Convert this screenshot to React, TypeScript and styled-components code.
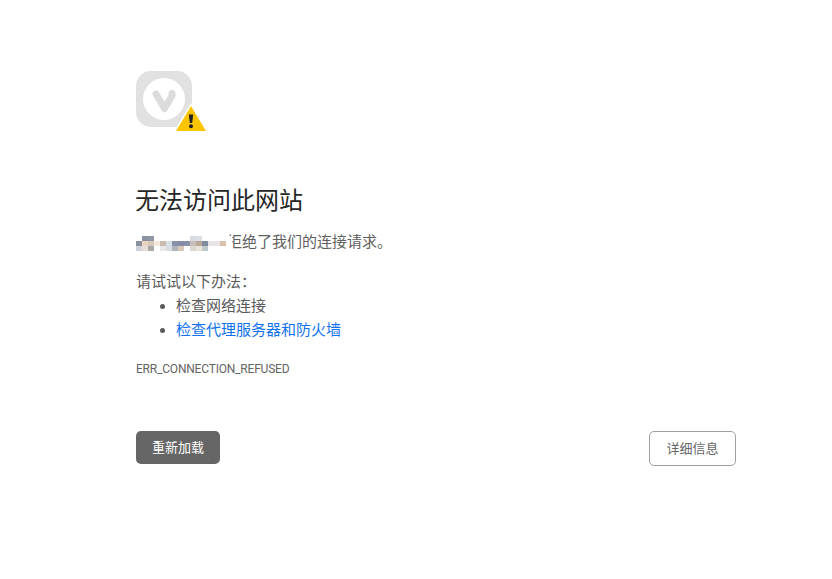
import styled, { createGlobalStyle } from 'styled-components';

const Global = createGlobalStyle`
  html, body { margin: 0; padding: 0; background: #fff; }
  body {
    font-family: "Liberation Sans", "Noto Sans CJK SC", sans-serif;
    color: #5a5a5a;
  }
`;
const Page = styled.div`
  width: 600px;
  margin-left: 136px;
  padding-top: 71px;
  height: 508px;
`;
const IconWrap = styled.div`
  width: 72px;
  height: 62px;
  display: block;
`;
const Title = styled.h1`
  margin: 51px 0 0 -1px;
  font-size: 24px;
  font-weight: 400;
  line-height: 34px;
  color: #262626;
`;
const Message = styled.p`
  margin: 12px 0 0;
  display: flex;
  align-items: center;
  font-size: 15px;
  line-height: 24px;
  height: 24px;
  color: #5f5f5f;
`;
// covers the host name and the start of the first word, like the pixelated original
const Mosaic = styled.span`
  position: relative;
  z-index: 1;
  display: grid;
  grid-template-columns: repeat(16, 6px);
  grid-auto-rows: 5px;
  width: 96px;
  flex: none;
  margin: 3px -5px 0 0;
`;
const Cell = styled.i<{ $c: string }>`
  display: block;
  background: ${p => p.$c};
`;
const Hint = styled.div`
  margin-top: 16px;
  font-size: 15px;
  line-height: 24px;
`;
const Tips = styled.ul`
  margin: 0;
  padding: 0 0 0 40px;
  font-size: 15px;
  line-height: 24px;
`;
const TipLink = styled.a`
  color: #1072f0;
  text-decoration: none;
`;
const Code = styled.div`
  margin-top: 19px;
  font-family: Roboto, "Liberation Sans", sans-serif;
  font-size: 12px;
  letter-spacing: -0.2px;
  line-height: 16px;
  color: #646464;
`;
const Actions = styled.div`
  margin-top: 54px;
  display: flex;
  justify-content: space-between;
  align-items: flex-start;
`;
const Reload = styled.button`
  width: 84px;
  height: 33px;
  border: 0;
  border-radius: 5px;
  background: #666;
  color: #fff;
  font: 13px "Liberation Sans", "Noto Sans CJK SC", sans-serif;
  padding: 0 0 2px;
`;
const Details = styled.button`
  width: 87px;
  height: 35px;
  border: 1px solid #a0a0a0;
  border-radius: 5px;
  background: #fff;
  color: #666;
  font: 13px "Liberation Sans", "Noto Sans CJK SC", sans-serif;
  padding: 0 0 2px;
`;

const mosaicRows = [
  ['#fff', '#8a93a3', '#8f97a6', '#fff', '#fff', '#fff', '#fff', '#fff', '#fff', '#d8dbe4', '#dcdfe6', '#fff', '#fff', '#fff', '#fff', '#fff'],
  ['#8a90a0', '#e8d4c0', '#d8c8b8', '#f3e9dc', '#c8bcb0', '#d8e0e6', '#8a90a8', '#868ca4', '#8a90a8', '#c8c0b8', '#b8a896', '#808aa0', '#e8e4e4', '#e8e4e4', '#d8c0ac', '#fff'],
  ['#cfd4dc', '#e4ddd8', '#a8a8a8', '#fff', '#e8e8e8', '#d8e0e4', '#b0b4bc', '#d8c8b8', '#fff', '#dcd8d0', '#e8e4dc', '#c0c8cc', '#fff', '#fff', '#fff', '#fff'],
];

const App = () => {
  return (
    <>
      <Global />
      <Page>
        <IconWrap>
          <svg width="72" height="62" viewBox="0 0 72 62">
            <rect x="0" y="0" width="56" height="56" rx="15" fill="#e1e1e1" />
            <circle cx="28" cy="28" r="21" fill="#fff" />
            <path d="M20 23 L28.5 37.5 L36 25 Q36.5 23.5 36 22.5" fill="none" stroke="#dcdcdc" strokeWidth="7" strokeLinecap="round" strokeLinejoin="round" />
            <path d="M55 32 L73 62 H37 Z" fill="#fff" />
            <path d="M55 35 L70 60 H40 Z" fill="#fdc500" />
            <path d="M52.8 43.5 H57.2 L56.2 52 H53.8 Z" fill="#222" />
            <circle cx="55" cy="55.2" r="2" fill="#222" />
          </svg>
        </IconWrap>
        <Title>无法访问此网站</Title>
        <Message>
          <Mosaic>
            {mosaicRows.flat().map((c, i) => <Cell key={i} $c={c} />)}
          </Mosaic>
          拒绝了我们的连接请求。
        </Message>
        <Hint>请试试以下办法：</Hint>
        <Tips>
          <li>检查网络连接</li>
          <li><TipLink href="#">检查代理服务器和防火墙</TipLink></li>
        </Tips>
        <Code>ERR_CONNECTION_REFUSED</Code>
        <Actions>
          <Reload>重新加载</Reload>
          <Details>详细信息</Details>
        </Actions>
      </Page>
    </>
  );
};
export default App;
